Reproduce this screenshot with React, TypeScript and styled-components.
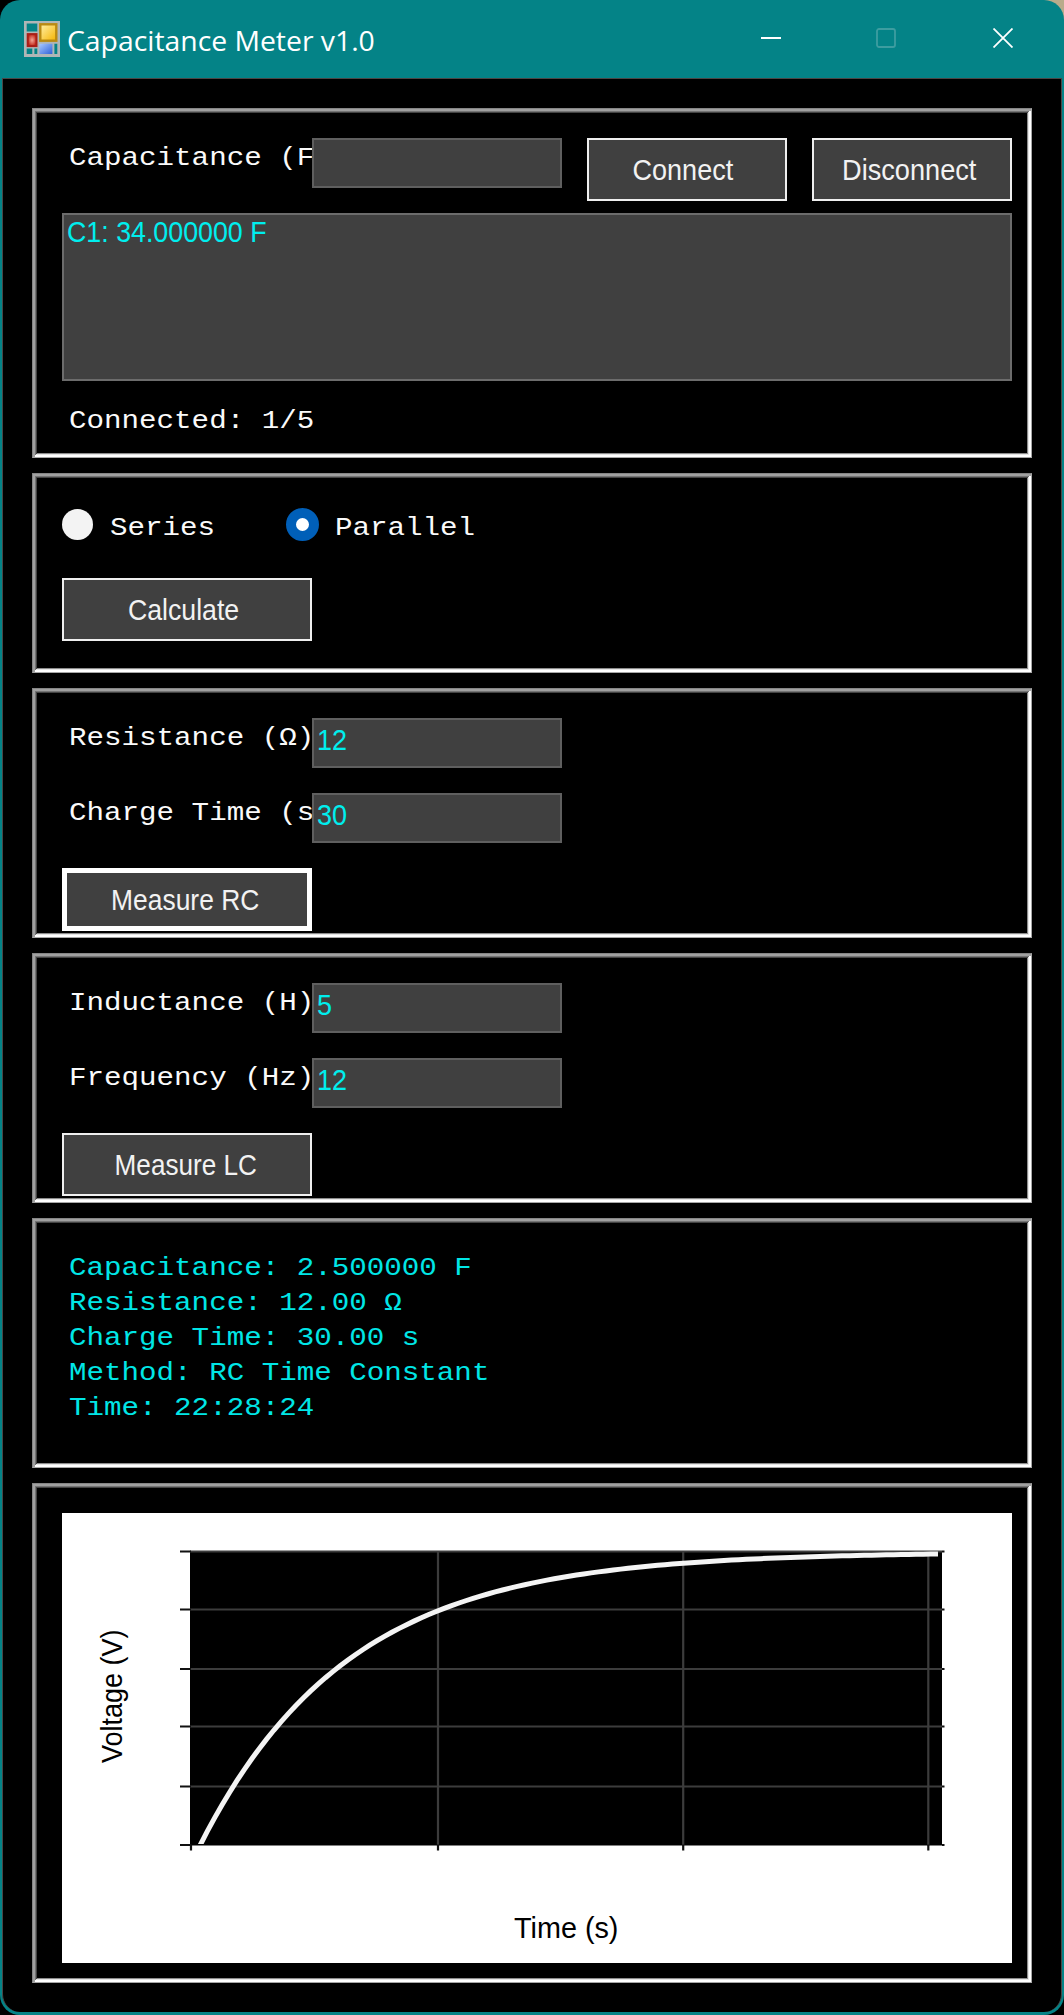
import React, { useState } from "react";
import styled, { createGlobalStyle } from "styled-components";

const TEAL = "#048387";
const SANS = `"Liberation Sans", Arial, sans-serif`;
const MONO = `"Liberation Mono", "Courier New", monospace`;

const GlobalStyle = createGlobalStyle`
  *, *::before, *::after { box-sizing: border-box; }
  body { margin: 0; background: #000; }
`;

const Desktop = styled.div`
  width: 1064px;
  height: 2015px;
  background: linear-gradient(90deg, #000 50%, #b9ab8b 50%) 0 0 / 100% 24px no-repeat, #000;
`;

const Window = styled.div`
  display: flex;
  flex-direction: column;
  height: 100%;
  padding: 0 2px 3px;
  border-radius: 20px;
  overflow: hidden;
  background: ${TEAL};
`;

const TitleBar = styled.header`
  display: flex;
  align-items: center;
  flex: none;
  height: 78px;
  padding: 0 49px 0 22px;
`;

const Title = styled.h1`
  flex: 1;
  margin: 2px 0 0 7px;
  font: 400 28px/40px "Open Sans", "Noto Sans", sans-serif;
  color: #fff;
  white-space: nowrap;
  transform: scaleX(1.012);
  transform-origin: 0 50%;
`;

const Controls = styled.div`
  display: flex;
  gap: 96px;
  margin-bottom: 2px;

  svg:nth-child(2) {
    margin: 0 1px 0 -1px;
  }
`;

const Client = styled.main`
  display: flex;
  flex-direction: column;
  gap: 15px;
  flex: 1;
  padding: 29px 29px 0 29px;
  border: 1px solid #4a4646;
  border-bottom: 0;
  border-radius: 0 0 18px 18px;
  background: #000;
`;

const Panel = styled.section<{ $height: number }>`
  flex: none;
  height: ${(p) => p.$height}px;
  padding: 29px 19px 0 29px;
  border: 1px solid;
  border-color: #858585 #a6a6a6 #a6a6a6 #858585;
  box-shadow:
    inset 2px 2px #a0a0a0,
    inset -2px -2px #fff,
    inset 3px 3px #747474,
    inset -3px -3px #e6e6e6,
    inset 4px 4px #434343,
    inset -4px -4px #8c8c8c;
`;

const FieldRow = styled.div`
  display: flex;
  height: 51px;
  margin-bottom: 24px;
`;

const Label = styled.label`
  flex: none;
  width: 250px;
  padding-left: 7px;
  overflow: hidden;
  font: 26.3px/40px ${MONO};
  color: #fafafa;
  white-space: nowrap;
`;

const Wide = styled.span`
  display: inline-block;
  transform: scaleX(1.11);
  transform-origin: 0 50%;
`;

const Field = styled.div`
  flex: none;
  width: 250px;
  height: 50px;
  padding: 0 3px;
  border: 2px solid #5f5f5f;
  background: #404040;
  font: 30px/40px ${SANS};
  color: #00eeee;
`;

const Squeeze = styled.span<{ $x?: number; $from?: string }>`
  display: inline-block;
  white-space: nowrap;
  transform: scaleX(${(p) => p.$x ?? 0.89});
  transform-origin: ${(p) => p.$from ?? "50%"} 50%;
`;

const Button = styled.button<{ $width: number; $focused?: boolean; $nudge?: number }>`
  display: flex;
  align-items: center;
  justify-content: center;
  flex: none;
  width: ${(p) => p.$width}px;
  height: 63px;
  padding: 1px ${(p) => p.$nudge ?? 6}px 0 0;
  border: ${(p) => (p.$focused ? "5px solid #fff" : "2.5px solid #efefef")};
  border-radius: 0;
  background: #404040;
  font: 30px/40px ${SANS};
  color: #f2f2f2;
`;

const ButtonPair = styled.div`
  display: flex;
  gap: 25px;
  margin-left: 25px;
`;

const ListBox = styled.div`
  height: 168px;
  padding: 0 3px;
  border: 2px solid #6c6c6c;
  background: #404040;
  font: 30px/34px ${SANS};
  color: #00eeee;
`;

const Status = styled.p`
  margin: 20px 0 0;
  padding-left: 7px;
  font: 26.3px/40px ${MONO};
  color: #fafafa;
`;

const RadioRow = styled.div`
  display: grid;
  grid-template-columns: 225px auto;
  height: 40px;
  margin: 5px 0 30px;
`;

const RadioLabel = styled.label`
  display: flex;
  align-items: flex-start;
  font: 26.3px/40px ${MONO};
  color: #fafafa;
`;

const RadioDot = styled.span<{ $on: boolean }>`
  flex: none;
  width: ${(p) => (p.$on ? 33 : 31)}px;
  height: ${(p) => (p.$on ? 33 : 31)}px;
  margin: ${(p) => (p.$on ? "0 16px 0 -1px" : "1px 17px 0 0")};
  border-radius: 50%;
  border: ${(p) => (p.$on ? "10px solid #005fb8" : "0")};
  background: ${(p) => (p.$on ? "#fff" : "#f3f3f3")};
`;

const Results = styled.pre`
  margin: 3px 0 0;
  padding-left: 7px;
  font: 26.3px/35px ${MONO};
  color: #00e6e6;
`;

const ChartSvg = styled.svg`
  display: block;
  width: 950px;
  height: 450px;
  background: #fff;
  font: 30px ${SANS};
`;

const AppIcon = () => (
  <svg width="36" height="36" viewBox="0 0 36 36">
    <defs>
      <linearGradient id="gold" x1="0" y1="0" x2="1" y2="1">
        <stop offset="0" stopColor="#fff0a8" />
        <stop offset="1" stopColor="#f5b400" />
      </linearGradient>
      <linearGradient id="sky" x1="0" y1="0" x2="1" y2="1">
        <stop offset="0" stopColor="#a8c8ff" />
        <stop offset="1" stopColor="#2f62d8" />
      </linearGradient>
      <radialGradient id="ruby">
        <stop offset="0" stopColor="#f2a596" />
        <stop offset="1" stopColor="#c22a1c" />
      </radialGradient>
    </defs>
    <rect width="36" height="36" fill="#b0b6b6" />
    <path fill={TEAL} d="M2.7 2.5h10.6v8H2.7zM2.7 27.4h5.6V33H2.7zM10.4 27.4h2.9V33h-2.9zM30.4 22.7h2.9V33h-2.9z" />
    <rect x="16.3" y="3.3" width="16" height="16.4" fill="url(#gold)" stroke="#b98a12" strokeWidth="2.4" />
    <rect x="3.7" y="13.1" width="8.8" height="12" fill="url(#ruby)" stroke="#a81e18" strokeWidth="2" />
    <rect x="15.4" y="22.7" width="13" height="10.3" fill="url(#sky)" />
  </svg>
);

const PLOT = { left: 128, right: 880, top: 38, bottom: 332.5 };
const Y_GRID = [38.5, 96.5, 156, 213.5, 273.5, 332];
const X_GRID = [376, 621.2, 866.3];
const TAU = 148;
const ORIGIN = 138;

const curve = Array.from({ length: 101 }, (_, i) => {
  const x = ORIGIN + (i / 100) * 738;
  const y = PLOT.bottom - 293.5 * (1 - Math.exp(-(x - ORIGIN) / TAU));
  return `${i ? "L" : "M"}${x.toFixed(2)} ${y.toFixed(2)}`;
}).join("");

const Chart = () => (
  <ChartSvg viewBox="0 0 950 450">
    <clipPath id="plot">
      <rect x={PLOT.left} y={PLOT.top} width={PLOT.right - PLOT.left} height={PLOT.bottom - PLOT.top - 1.5} />
    </clipPath>
    <rect x={PLOT.left} y={PLOT.top} width={PLOT.right - PLOT.left} height={PLOT.bottom - PLOT.top} fill="#000" />
    <g stroke="#3c3c3c" strokeWidth="2.2">
      {Y_GRID.slice(0, 5).map((y) => (
        <path key={y} d={`M${PLOT.left} ${y}H${PLOT.right}`} />
      ))}
      {X_GRID.map((x) => (
        <path key={x} d={`M${x} ${PLOT.top}V${PLOT.bottom}`} />
      ))}
    </g>
    <g stroke="#111" strokeWidth="2.2">
      {Y_GRID.map((y) => (
        <path key={y} d={`M118 ${y}h11M${PLOT.right} ${y}h2.5`} />
      ))}
      {[PLOT.left + 1, ...X_GRID].map((x) => (
        <path key={x} d={`M${x} ${PLOT.bottom - 1}v6`} />
      ))}
    </g>
    <path d={curve} clipPath="url(#plot)" fill="none" stroke="#f4f4f4" strokeWidth="5" />
    <text transform="translate(60 250) rotate(-90) scale(0.9 1)">Voltage (V)</text>
    <text transform="translate(452 424.5) scale(0.96 1)">Time (s)</text>
  </ChartSvg>
);

interface FieldProps {
  label: string;
  value: string;
}

const LabeledField = ({ label, value }: FieldProps) => (
  <>
    <Label>
      <Wide>{label}</Wide>
    </Label>
    <Field>
      <Squeeze $x={0.9} $from="0">{value}</Squeeze>
    </Field>
  </>
);

export default function App() {
  const [mode, setMode] = useState("Parallel");
  return (
    <>
      <GlobalStyle />
      <Desktop>
        <Window>
          <TitleBar>
            <AppIcon />
            <Title>Capacitance Meter v1.0</Title>
            <Controls>
              <svg width="20" height="20" stroke="#fff" strokeWidth="2">
                <path d="M0 10h20" />
              </svg>
              <svg width="20" height="20" fill="none" stroke="#3d9da0" strokeWidth="1.8">
                <rect x="1" y="1" width="18" height="18" rx="2" />
              </svg>
              <svg width="20" height="20" stroke="#fff" strokeWidth="1.8">
                <path d="M0.5 0.5l19 19M19.5 0.5l-19 19" />
              </svg>
            </Controls>
          </TitleBar>
          <Client>
            <Panel $height={350}>
              <FieldRow>
                <LabeledField label="Capacitance (F):" value="" />
                <ButtonPair>
                  <Button $width={200} $nudge={8}>
                    <Squeeze $x={0.9}>Connect</Squeeze>
                  </Button>
                  <Button $width={200}>
                    <Squeeze $x={0.905}>Disconnect</Squeeze>
                  </Button>
                </ButtonPair>
              </FieldRow>
              <ListBox>
                <Squeeze $x={0.893} $from="0">C1: 34.000000 F</Squeeze>
              </ListBox>
              <Status>
                <Wide>Connected: 1/5</Wide>
              </Status>
            </Panel>
            <Panel $height={200}>
              <RadioRow>
                {["Series", "Parallel"].map((name) => (
                  <RadioLabel key={name} onClick={() => setMode(name)}>
                    <RadioDot $on={mode === name} />
                    <Wide>{name}</Wide>
                  </RadioLabel>
                ))}
              </RadioRow>
              <Button $width={250}>
                <Squeeze>Calculate</Squeeze>
              </Button>
            </Panel>
            <Panel $height={250}>
              <FieldRow>
                <LabeledField label="Resistance (Ω):" value="12" />
              </FieldRow>
              <FieldRow>
                <LabeledField label="Charge Time (s):" value="30" />
              </FieldRow>
              <Button $width={250} $focused $nudge={3}>
                <Squeeze $x={0.88}>Measure RC</Squeeze>
              </Button>
            </Panel>
            <Panel $height={250}>
              <FieldRow>
                <LabeledField label="Inductance (H):" value="5" />
              </FieldRow>
              <FieldRow>
                <LabeledField label="Frequency (Hz):" value="12" />
              </FieldRow>
              <Button $width={250} $nudge={2}>
                <Squeeze $x={0.87}>Measure LC</Squeeze>
              </Button>
            </Panel>
            <Panel $height={250}>
              <Results>
                <Wide>{`Capacitance: 2.500000 F
Resistance: 12.00 Ω
Charge Time: 30.00 s
Method: RC Time Constant
Time: 22:28:24`}</Wide>
              </Results>
            </Panel>
            <Panel $height={500}>
              <Chart />
            </Panel>
          </Client>
        </Window>
      </Desktop>
    </>
  );
}
